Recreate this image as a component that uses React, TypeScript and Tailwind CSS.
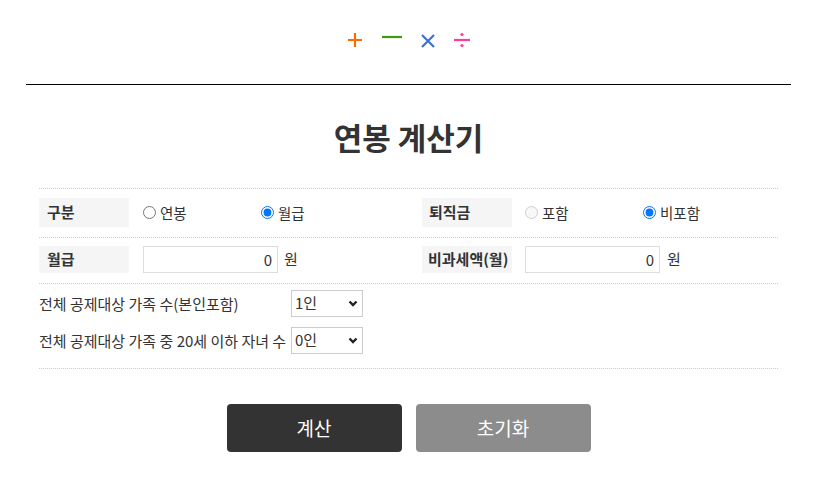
import { useState } from "react";

const Chevron = () => (
    <svg width="10" height="7" viewBox="0 0 10 7" className="pointer-events-none absolute right-[5px] top-[10px]">
        <polyline points="1.5,1.5 5,5 8.5,1.5" fill="none" stroke="#222" strokeWidth="2.4" />
    </svg>
);

const Radio = ({ name, label, checked, disabled, onChange }: { name: string; label: string; checked?: boolean; disabled?: boolean; onChange?: () => void }) => (
    <label className="flex w-[118px] items-center gap-[4px]">
        <input type="radio" name={name} checked={checked} disabled={disabled} onChange={onChange} className="m-0 h-[13px] w-[13px]" />
        <span className="text-[14.5px] leading-[20px]">{label}</span>
    </label>
);

const App = () => {
    const [kind, setKind] = useState('month');
    const [severance, setSeverance] = useState('exclude');
    const [family, setFamily] = useState('1');
    const [children, setChildren] = useState('0');

    return (
        <div className="min-h-screen bg-white font-['Noto_Sans_CJK_KR','Noto_Sans',sans-serif] text-[#333]">
            <div className="ml-[26px] w-[765px]">
                {/* 상단 아이콘 */}
                <div className="flex h-[85px] justify-center gap-[19px] border-b border-black pt-[32px]">
                    <svg width="16" height="16" viewBox="0 0 16 16">
                        <path d="M1 8h14M8 1v14" stroke="#ff6a00" strokeWidth="2.2" />
                    </svg>
                    <svg width="20" height="16" viewBox="0 0 20 16">
                        <path d="M0 5h20" stroke="#3c9a0c" strokeWidth="2.2" />
                    </svg>
                    <svg width="14" height="16" viewBox="0 0 14 16">
                        <path d="M1 3l12 12M13 3L1 15" stroke="#3f6fd6" strokeWidth="2.2" />
                    </svg>
                    <svg width="16" height="16" viewBox="0 0 16 16">
                        <path d="M0 8h16" stroke="#ff3d9a" strokeWidth="2.2" />
                        <circle cx="8" cy="2.5" r="1.6" fill="#ff3d9a" />
                        <circle cx="8" cy="13.5" r="1.6" fill="#ff3d9a" />
                    </svg>
                </div>

                <h1 className="mt-[32px] mb-[31px] text-center text-[31px] font-bold leading-[40px]">연봉 계산기</h1>

                <div className="mx-[13px] text-[15px]">
                    {/* 구분 / 퇴직금 */}
                    <div className="flex items-center border-t border-dotted border-[#ccc] pt-[9px] pb-[10px]">
                        <div className="flex w-[383px] items-center">
                            <div className="flex h-[29px] w-[90px] items-center bg-[#f5f5f5] pl-[8px] font-bold">구분</div>
                            <div className="ml-[14px] flex">
                                <Radio name="kind" label="연봉" checked={kind === 'year'} onChange={() => setKind('year')} />
                                <Radio name="kind" label="월급" checked={kind === 'month'} onChange={() => setKind('month')} />
                            </div>
                        </div>
                        <div className="flex items-center">
                            <div className="flex h-[29px] w-[90px] items-center bg-[#f5f5f5] pl-[7px] font-bold">퇴직금</div>
                            <div className="ml-[13px] flex">
                                <Radio name="severance" label="포함" disabled checked={severance === 'include'} />
                                <Radio name="severance" label="비포함" checked={severance === 'exclude'} onChange={() => setSeverance('exclude')} />
                            </div>
                        </div>
                    </div>

                    {/* 월급 / 비과세액 */}
                    <div className="flex items-center border-t border-dotted border-[#ccc] pt-[8px] pb-[10px]">
                        <div className="flex w-[383px] items-center">
                            <div className="flex h-[27px] w-[90px] items-center bg-[#f5f5f5] pl-[8px] font-bold">월급</div>
                            <input type="text" defaultValue="0" className="ml-[14px] h-[27px] w-[135px] border border-[#ddd] pr-[5px] text-right text-[15px] outline-none" />
                            <span className="ml-[6px]">원</span>
                        </div>
                        <div className="flex items-center">
                            <div className="flex h-[27px] w-[90px] items-center bg-[#f5f5f5] pl-[6px] font-bold">비과세액(월)</div>
                            <input type="text" defaultValue="0" className="ml-[13px] h-[27px] w-[135px] border border-[#ddd] pr-[5px] text-right text-[15px] outline-none" />
                            <span className="ml-[7px]">원</span>
                        </div>
                    </div>

                    {/* 가족 수 */}
                    <div className="flex flex-col gap-[10px] border-y border-dotted border-[#ccc] pt-[6px] pb-[14px]">
                        <div className="flex items-center">
                            <span className="w-[252px] text-[15px] leading-[20px]">전체 공제대상 가족 수(본인포함)</span>
                            <div className="relative">
                                <select value={family} onChange={(e) => setFamily(e.target.value)} className="h-[27px] w-[72px] appearance-none border border-[#ccc] bg-white pl-[3px] text-[15px]">
                                    <option value="1">1인</option>
                                    <option value="2">2인</option>
                                    <option value="3">3인</option>
                                </select>
                                <Chevron />
                            </div>
                        </div>
                        <div className="flex items-center">
                            <span className="w-[252px] whitespace-nowrap text-[15px] leading-[20px]">전체 공제대상 가족 중 20세 이하 자녀 수</span>
                            <div className="relative">
                                <select value={children} onChange={(e) => setChildren(e.target.value)} className="h-[27px] w-[72px] appearance-none border border-[#ccc] bg-white pl-[3px] text-[15px]">
                                    <option value="0">0인</option>
                                    <option value="1">1인</option>
                                    <option value="2">2인</option>
                                </select>
                                <Chevron />
                            </div>
                        </div>
                    </div>
                </div>

                <div className="mt-[35px] flex justify-center gap-[14px]">
                    <button className="h-[48px] w-[175px] rounded-[4px] bg-[#333] text-[19px] text-white">계산</button>
                    <button className="h-[48px] w-[175px] rounded-[4px] bg-[#8c8c8c] text-[19px] text-white">초기화</button>
                </div>
            </div>
        </div>
    );
};

export default App;
